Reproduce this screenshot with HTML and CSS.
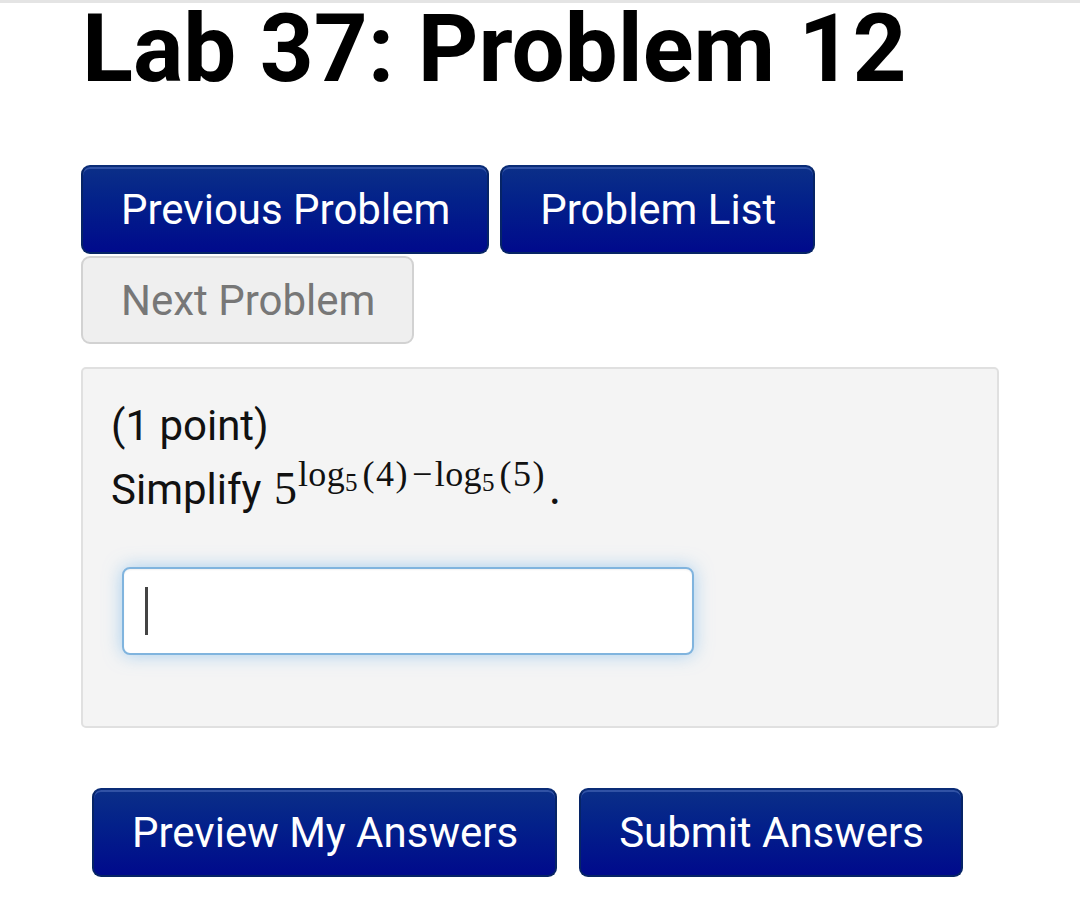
FILE: index.html
```html
<!DOCTYPE html>
<html>
<head>
<meta charset="utf-8">
<link rel="stylesheet" href="styles.css">
</head>
<body>
<div class="topline"></div>
<main class="page">
  <h1 class="title">Lab 37: Problem 12</h1>
  <nav class="nav">
    <a class="btn btn-primary">Previous Problem</a>
    <a class="btn btn-primary">Problem List</a>
    <a class="btn btn-disabled">Next Problem</a>
  </nav>
  <section class="problem">
    <div class="points">(1 point)</div>
    <div class="statement">Simplify <span class="math"><span class="base">5</span><span class="exp">log<span class="sub">5</span><span class="paren">(4)</span><span class="minus">&minus;</span>log<span class="sub">5</span><span class="paren">(5)</span></span></span><span class="math-dot">.</span></div>
    <div class="answer-wrap">
      <div class="answer"><span class="caret"></span></div>
    </div>
  </section>
  <div class="submit-row">
    <a class="btn btn-primary">Preview My Answers</a>
    <a class="btn btn-primary">Submit Answers</a>
  </div>
</main>
</body>
</html>
```

FILE: styles.css
```css
html, body {
  margin: 0;
  padding: 0;
  background: #fff;
}
body {
  font-family: Roboto, "Noto Sans", sans-serif;
  color: #111;
}
.topline {
  height: 3px;
  background: #e4e4e4;
}
.page {
  padding-left: 81px;
  width: 918px;
}
.title {
  font-family: Roboto, sans-serif;
  font-weight: 700;
  font-size: 94.2px;
  line-height: 92px;
  margin: 0 0 0 1px;
  color: #000;
  letter-spacing: 0;
  white-space: nowrap;
}
.nav {
  display: flex;
  flex-wrap: wrap;
  gap: 2px 11px;
  margin-top: 70px;
  width: 760px;
}
.btn {
  display: inline-flex;
  align-items: center;
  justify-content: center;
  box-sizing: border-box;
  height: 89px;
  padding: 0 37px 0 38px;
  font-size: 42px;
  border-radius: 9px;
  text-decoration: none;
  white-space: nowrap;
}
.btn-primary {
  color: #fff;
  background: linear-gradient(to bottom, #0b2f88 0%, #03218a 40%, #000a8c 100%);
  border: 2px solid #062466;
  border-top-color: #0a2c77;
  box-shadow: inset 0 2px 0 rgba(120, 150, 220, 0.35);
}
.btn-disabled {
  color: #777;
  background: #efefef;
  border: 2px solid #d2d2d2;
  height: 88px;
}
.problem {
  margin-top: 23px;
  box-sizing: border-box;
  width: 918px;
  height: 361px;
  background: #f4f4f4;
  border: 2px solid #e0e0e0;
  border-radius: 5px;
  padding: 25px 0 0 28px;
}
.points {
  font-size: 42px;
  line-height: 63px;
  color: #111;
}
.statement {
  font-size: 42px;
  line-height: 63px;
  height: 63px;
  color: #111;
  white-space: nowrap;
}
.math {
  font-family: "Liberation Serif", "DejaVu Serif", serif;
  color: #111;
  margin-left: 2px;
}
.base {
  font-size: 46px;
}
.exp {
  font-size: 36px;
  position: relative;
  top: -18px;
  margin-left: 1px;
  letter-spacing: 0.4px;
}
.sub {
  font-size: 25px;
  position: relative;
  top: 5px;
  margin: 0 5px 0 0;
  letter-spacing: 0;
}
.paren {
  letter-spacing: 1.5px;
}
.minus {
  margin: 0 2px 0 3px;
}
.math-dot {
  font-family: "Liberation Serif", serif;
  font-size: 46px;
  margin-left: 3px;
}
.answer-wrap {
  margin-top: 47px;
  padding-left: 11px;
}
.answer {
  box-sizing: border-box;
  width: 572px;
  height: 88px;
  background: #fff;
  border: 2px solid #80b4de;
  border-radius: 8px;
  box-shadow: 0 0 18px rgba(102, 175, 233, 0.55), inset 0 1px 2px rgba(0, 0, 0, 0.06);
  display: flex;
  align-items: center;
  padding-left: 21px;
}
.caret {
  display: block;
  width: 3px;
  height: 48px;
  background: #444;
}
.submit-row {
  display: flex;
  gap: 22px;
  margin-top: 60px;
  padding-left: 11px;
}
```
